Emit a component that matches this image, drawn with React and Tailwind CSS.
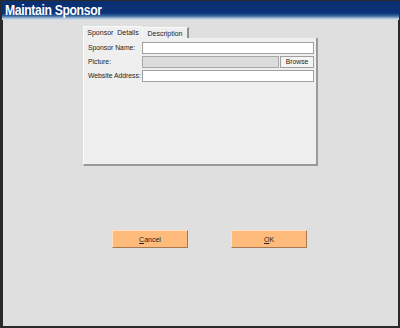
export default function App() {
  const f = { fontFamily: '"Liberation Sans", Arial, sans-serif' };
  return (
    <div className="w-[400px] h-[328px] bg-[#2a2a2a] flex flex-col overflow-hidden" style={f}>
      <div className="h-[19px] flex items-center pl-[3px] bg-[linear-gradient(to_bottom,#0a2f72_0px,#0a3278_12px,#3a6aa0_15px,#c8d8e6_18px)] ml-[2px] mr-[1px] mt-[1px]">
        <span className="inline-block origin-left scale-x-[0.87] text-white font-bold text-[14px] leading-none tracking-[-0.4px] -mt-[2px] whitespace-nowrap">Maintain Sponsor</span>
      </div>
      <div className="flex-1 bg-[#dfdfdf] ml-[3px] mr-[2px] mb-[2px] flex flex-col">
        <div className="ml-[80px] mt-[6px] w-[235px] flex flex-col">
          <div className="flex h-[12px] items-end">
            <div className="h-[12px] w-[59px] bg-[#efefef] border-t border-l border-[#fafafa] text-[7px] text-[#222] flex items-center justify-center leading-none whitespace-nowrap">Sponsor&nbsp; Details</div>
            <div className="h-[11px] w-[47px] bg-[#efefef] border-t border-l border-[#fafafa] border-r-2 border-r-[#909090] text-[7px] text-[#222] flex items-center justify-center leading-none whitespace-nowrap">Description</div>
          </div>
          <div className="h-[128px] bg-[#efefef] border-l border-[#fafafa] border-r-2 border-r-[#9a9a9a] border-b-2 border-b-[#9a9a9a] pt-[4px] pl-[4px] pr-[2px] flex flex-col gap-[2px] text-[6.8px] text-[#222]">
            <div className="flex items-center h-[12px]">
              <span className="w-[54px] leading-none whitespace-nowrap">Sponsor Name:</span>
              <div className="flex-1 h-[12px] bg-white border border-[#a0a0a0]" />
            </div>
            <div className="flex items-center h-[12px]">
              <span className="w-[54px] leading-none whitespace-nowrap">Picture:</span>
              <div className="w-[137px] h-[12px] bg-[#dcdcdc] border border-[#a8a8a8]" />
              <div className="ml-[1px] flex-1 h-[12px] bg-[#f4f4f4] border border-[#a0a0a0] flex items-center justify-center leading-none">Browse</div>
            </div>
            <div className="flex items-center h-[12px]">
              <span className="w-[54px] leading-none whitespace-nowrap">Website Address:</span>
              <div className="flex-1 h-[12px] bg-white border border-[#a0a0a0]" />
            </div>
          </div>
        </div>
        <div className="mt-[64px] flex">
          <div className="ml-[109px] w-[76px] h-[18px] bg-[#ffbb7c] border-t border-l border-[#ffe0c0] border-r border-b border-r-[#a87850] border-b-[#a87850] text-[7px] text-[#222] flex items-center justify-center leading-none"><span className="underline">C</span>ancel</div>
          <div className="ml-[43px] w-[76px] h-[18px] bg-[#ffbb7c] border-t border-l border-[#ffe0c0] border-r border-b border-r-[#a87850] border-b-[#a87850] text-[7px] text-[#222] flex items-center justify-center leading-none"><span className="underline">O</span>K</div>
        </div>
      </div>
    </div>
  );
}
